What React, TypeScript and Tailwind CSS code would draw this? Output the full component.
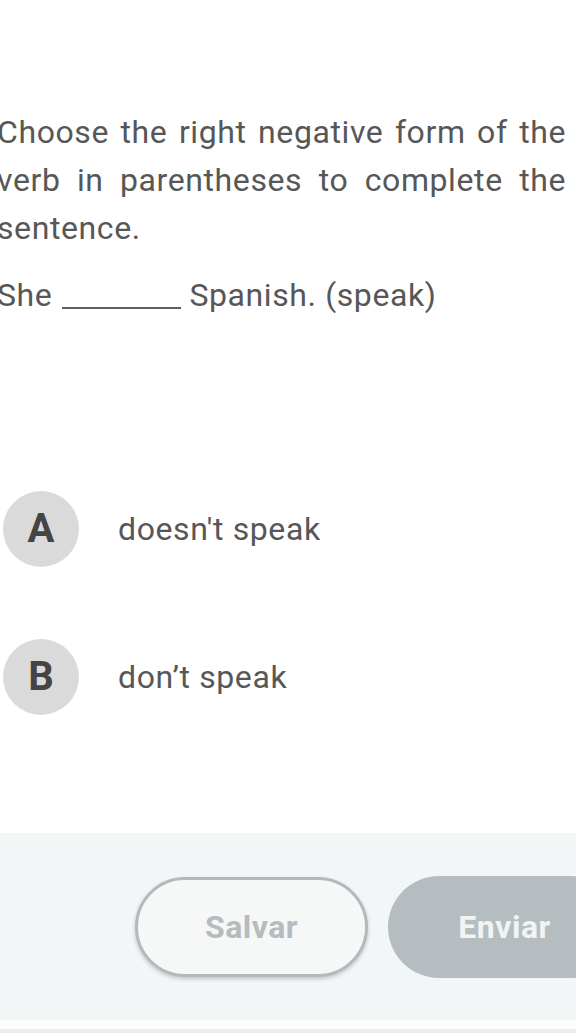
const OPTIONS = [
  { letter: "A", text: "doesn't speak" },
  { letter: "B", text: "don’t speak" }
];

const App = () => {
  return (
    <div className="w-[576px] h-[1033px] overflow-hidden bg-white font-['Roboto',sans-serif] flex flex-col">
      <div className="pt-[108px] text-[32px] leading-[48px] tracking-[0.6px] text-[#575757]">
        <p className="-ml-[3px] w-[569px] text-justify">
          Choose the right negative form of the verb in parentheses to complete the sentence.
        </p>
        <p className="-ml-[3px] mt-[19px] whitespace-nowrap">
          She
          <span className="inline-block w-[119px] h-[2px] bg-[#606060] ml-[10px] mr-[8px] relative top-[3px]"></span>
          Spanish. (speak)
        </p>
      </div>

      <div className="mt-[172px] flex flex-col gap-[72px]">
        {OPTIONS.map((option) => (
          <div key={option.letter} className="flex items-center">
            <div className="ml-[3px] w-[76px] h-[76px] rounded-full bg-[#dadada] flex items-center justify-center text-[40px] font-bold text-[#444444]">
              {option.letter}
            </div>
            <p className="ml-[39px] text-[32px] tracking-[0.6px] text-[#575757]">{option.text}</p>
          </div>
        ))}
      </div>

      <div className="mt-[118px] h-[187px] bg-[#f3f6f7] flex items-center gap-[20px] pl-[135px] overflow-hidden">
        <button className="shrink-0 w-[233px] h-[100px] rounded-full border-[3px] border-[#b3b9bc] bg-[#f6f7f7] shadow-[0_2px_4px_rgba(0,0,0,0.2)] text-[32px] tracking-[0.5px] font-bold text-[#b5bbbe]">
          Salvar
        </button>
        <button className="shrink-0 w-[233px] h-[102px] rounded-full bg-[#b6bdc0] text-[32px] tracking-[0.5px] font-bold text-[#f2f3f3]">
          Enviar
        </button>
      </div>
      <div className="h-[9px] bg-[#fbfcfc]"></div>
      <div className="h-[4px] bg-[#ececec]"></div>
    </div>
  );
};

export default App;
